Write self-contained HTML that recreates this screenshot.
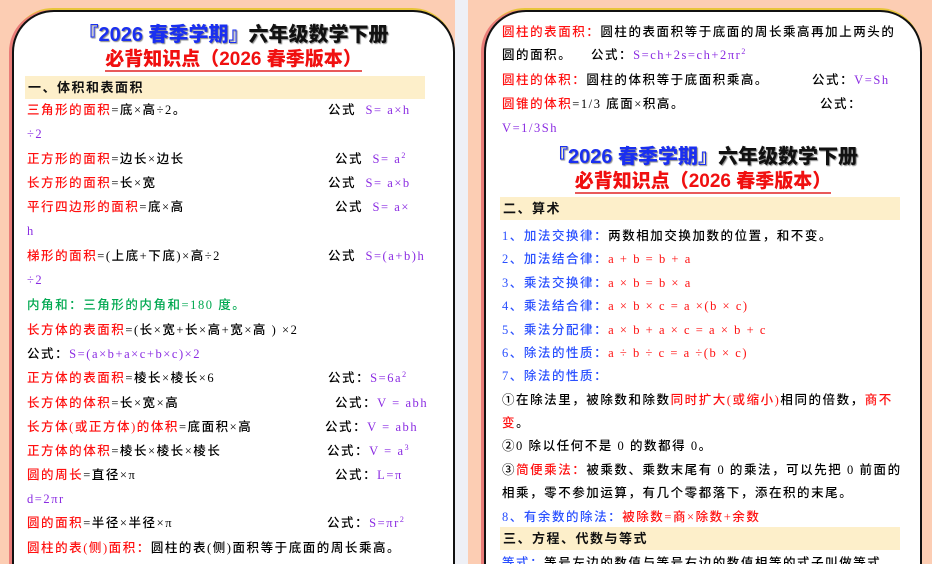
<!DOCTYPE html>
<html><head><meta charset="utf-8"><style>
*{margin:0;padding:0;box-sizing:border-box}
html,body{width:932px;height:564px;overflow:hidden}
body{background:#fccdb3;position:relative;font-family:"Liberation Serif","Noto Sans CJK SC",serif}
.strip{position:absolute;left:455px;top:0;width:13px;height:564px;background:#eef0f6}
.card{position:absolute;top:10px;height:554px;background:#fff;border:2px solid #111;border-bottom:none;border-radius:42px 42px 0 0;box-shadow:-3px 0 0 #e97c78,-1px -2px 0 #e8c53a}
.l{position:absolute;white-space:nowrap;font-size:12.5px;letter-spacing:1.55px;line-height:18px;height:18px;color:#000;font-weight:500;font-family:"Liberation Serif","Noto Sans CJK SC",serif}
.r{color:#ff1010}.p{color:#8a2be2}.b{color:#2a50ff}.g{color:#00a850}
.band{position:absolute;height:23px;background:#fdefca;font-family:"Liberation Sans","Noto Sans CJK SC",sans-serif;font-weight:bold;font-size:13px;letter-spacing:1.5px;line-height:23px;padding-left:3px;color:#111}
.t1{position:absolute;text-align:center;font-family:"Liberation Sans","Noto Sans CJK SC",sans-serif;font-weight:900;font-size:20px;line-height:26px;color:#111;text-shadow:1px 1px 1px #888;white-space:nowrap}
.t1 .bl{color:#1a2ff0}
.t2{position:absolute;text-align:center;font-family:"Liberation Sans","Noto Sans CJK SC",sans-serif;font-weight:900;font-size:19px;line-height:24px;color:#f01010;white-space:nowrap}
.t2 span{border-bottom:2px solid #e85a5a}
sup{font-size:8px;position:relative;top:-5px;vertical-align:baseline;line-height:0;letter-spacing:0}
</style></head><body>
<div class="strip"></div>
<div class="card" style="left:12px;width:443px"></div>
<div class="card" style="left:484px;width:438px"></div>

<div class="t1" style="left:12px;width:443px;top:22px"><span class="bl">『2026 春季学期』</span>六年级数学下册</div>
<div class="t2" style="left:12px;width:443px;top:48px"><span>必背知识点（2026 春季版本）</span></div>
<div class="band" style="left:25px;top:76px;width:400px">一、体积和表面积</div>

<div class="l" style="left:27px;top:101px"><span class="r">三角形的面积</span>=底×高÷2。</div><div class="l" style="left:328px;top:101px">公式 <span class="p">&nbsp;S= a×h</span></div>
<div class="l p" style="left:27px;top:125px">÷2</div>
<div class="l" style="left:27px;top:150px"><span class="r">正方形的面积</span>=边长×边长</div><div class="l" style="left:335px;top:150px">公式 <span class="p">&nbsp;S= a<sup>2</sup></span></div>
<div class="l" style="left:27px;top:174px"><span class="r">长方形的面积</span>=长×宽</div><div class="l" style="left:328px;top:174px">公式 <span class="p">&nbsp;S= a×b</span></div>
<div class="l" style="left:27px;top:198px"><span class="r">平行四边形的面积</span>=底×高</div><div class="l" style="left:335px;top:198px">公式 <span class="p">&nbsp;S= a×</span></div>
<div class="l p" style="left:27px;top:222px">h</div>
<div class="l" style="left:27px;top:247px"><span class="r">梯形的面积</span>=(上底+下底)×高÷2</div><div class="l" style="left:328px;top:247px">公式 <span class="p">&nbsp;S=(a+b)h</span></div>
<div class="l p" style="left:27px;top:271px">÷2</div>
<div class="l g" style="left:27px;top:296px">内角和：三角形的内角和=180 度。</div>
<div class="l" style="left:27px;top:321px"><span class="r">长方体的表面积</span>=(长×宽+长×高+宽×高 ) ×2</div>
<div class="l" style="left:27px;top:345px">公式：<span class="p">S=(a×b+a×c+b×c)×2</span></div>
<div class="l" style="left:27px;top:369px"><span class="r">正方体的表面积</span>=棱长×棱长×6</div><div class="l" style="left:328px;top:369px">公式：<span class="p">S=6a<sup>2</sup></span></div>
<div class="l" style="left:27px;top:394px"><span class="r">长方体的体积</span>=长×宽×高</div><div class="l" style="left:335px;top:394px">公式：<span class="p">V = abh</span></div>
<div class="l" style="left:27px;top:418px"><span class="r">长方体(或正方体)的体积</span>=底面积×高</div><div class="l" style="left:325px;top:418px">公式：<span class="p">V = abh</span></div>
<div class="l" style="left:27px;top:442px"><span class="r">正方体的体积</span>=棱长×棱长×棱长</div><div class="l" style="left:327px;top:442px">公式：<span class="p">V = a<sup>3</sup></span></div>
<div class="l" style="left:27px;top:466px"><span class="r">圆的周长</span>=直径×π</div><div class="l" style="left:335px;top:466px">公式：<span class="p">L=π</span></div>
<div class="l p" style="left:27px;top:490px">d=2πr</div>
<div class="l" style="left:27px;top:514px"><span class="r">圆的面积</span>=半径×半径×π</div><div class="l" style="left:327px;top:514px">公式：<span class="p">S=πr<sup>2</sup></span></div>
<div class="l" style="left:27px;top:539px"><span class="r">圆柱的表(侧)面积：</span>圆柱的表(侧)面积等于底面的周长乘高。</div>

<div class="l" style="left:502px;top:23px"><span class="r">圆柱的表面积：</span>圆柱的表面积等于底面的周长乘高再加上两头的</div>
<div class="l" style="left:502px;top:46px">圆的面积。 &nbsp;&nbsp;&nbsp;公式：<span class="p">S=ch+2s=ch+2πr<sup>2</sup></span></div>
<div class="l" style="left:502px;top:71px"><span class="r">圆柱的体积：</span>圆柱的体积等于底面积乘高。</div><div class="l" style="left:812px;top:71px">公式：<span class="p">V=Sh</span></div>
<div class="l" style="left:502px;top:95px"><span class="r">圆锥的体积</span>=1/3 底面×积高。</div><div class="l" style="left:820px;top:95px">公式：</div>
<div class="l p" style="left:502px;top:119px">V=1/3Sh</div>

<div class="t1" style="left:484px;width:438px;top:144px"><span class="bl">『2026 春季学期』</span>六年级数学下册</div>
<div class="t2" style="left:484px;width:438px;top:170px"><span>必背知识点（2026 春季版本）</span></div>
<div class="band" style="left:500px;top:197px;width:400px">二、算术</div>

<div class="l" style="left:502px;top:227px"><span class="b">1、加法交换律：</span>两数相加交换加数的位置，和不变。</div>
<div class="l" style="left:502px;top:250px"><span class="b">2、加法结合律：</span><span class="r">a + b = b + a</span></div>
<div class="l" style="left:502px;top:274px"><span class="b">3、乘法交换律：</span><span class="r">a × b = b × a</span></div>
<div class="l" style="left:502px;top:297px"><span class="b">4、乘法结合律：</span><span class="r">a × b × c = a ×(b × c)</span></div>
<div class="l" style="left:502px;top:321px"><span class="b">5、乘法分配律：</span><span class="r">a × b + a × c = a × b + c</span></div>
<div class="l" style="left:502px;top:344px"><span class="b">6、除法的性质：</span><span class="r">a ÷ b ÷ c = a ÷(b × c)</span></div>
<div class="l" style="left:502px;top:367px"><span class="b">7、除法的性质：</span></div>
<div class="l" style="left:502px;top:391px">①在除法里，被除数和除数<span class="r">同时扩大(或缩小)</span>相同的倍数，<span class="r">商不</span></div>
<div class="l" style="left:502px;top:414px"><span class="r">变</span>。</div>
<div class="l" style="left:502px;top:437px">②0 除以任何不是 0 的数都得 0。</div>
<div class="l" style="left:502px;top:461px">③<span class="r">简便乘法：</span>被乘数、乘数末尾有 0 的乘法，可以先把 0 前面的</div>
<div class="l" style="left:502px;top:484px">相乘，零不参加运算，有几个零都落下，添在积的末尾。</div>
<div class="l" style="left:502px;top:508px"><span class="b">8、有余数的除法：</span><span class="r">被除数=商×除数+余数</span></div>
<div class="band" style="left:500px;top:527px;width:400px">三、方程、代数与等式</div>
<div class="l" style="left:502px;top:554px"><span class="b">等式：</span>等号左边的数值与等号右边的数值相等的式子叫做等式。</div>
</body></html>
